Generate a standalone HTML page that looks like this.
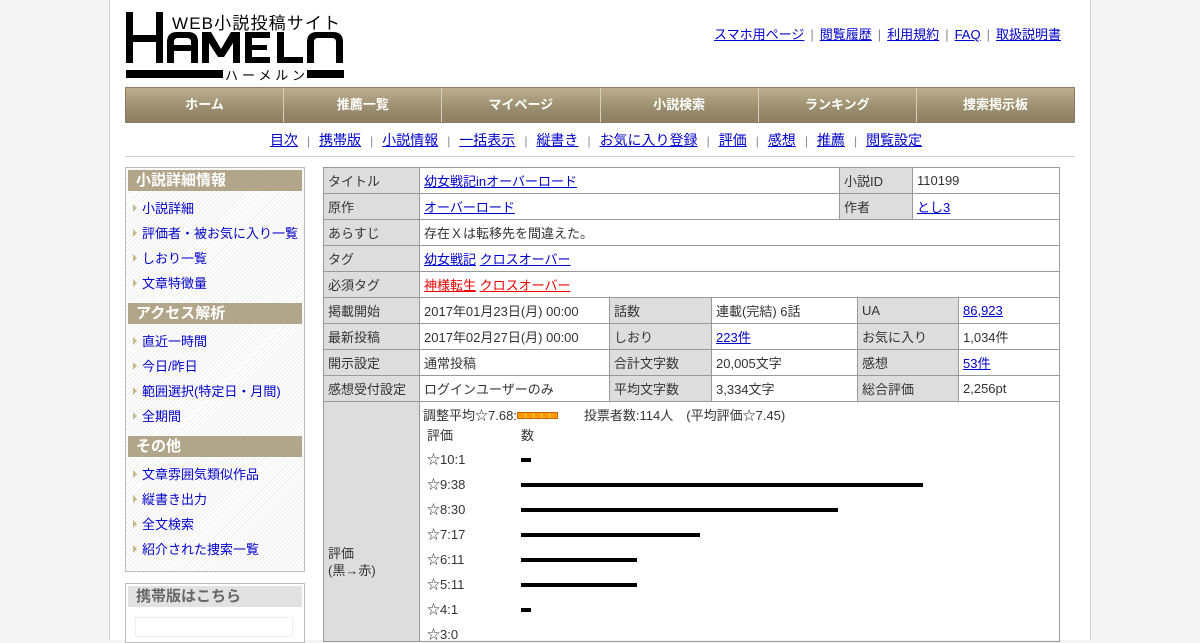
<!DOCTYPE html>
<html><head><meta charset="utf-8"><style>
*{margin:0;padding:0;box-sizing:border-box}
body{width:1200px;height:630px;overflow:hidden;background:#f4f4f4;font-family:"Liberation Sans","Noto Sans CJK JP",sans-serif;font-size:13px;color:#333;position:relative}
a{color:#00c;text-decoration:underline}
.page{position:absolute;left:109px;top:0;width:982px;height:640px;background:#fff;border-left:1px solid #ccc;border-right:1px solid #ccc}
.abs{position:absolute}
.toplinks{position:absolute;right:29px;top:24px;font-size:13px;color:#666}
.toplinks span{margin:0 6px;color:#888}
.nav{position:absolute;left:15px;top:87px;width:950px;height:36px;display:flex;border:1px solid #8a7d60}
.nav div{flex:1;text-align:center;line-height:34px;color:#fff;font-weight:bold;font-size:13px;background:linear-gradient(#bcae8d,#9b8e6f 60%,#8c7f61);border-right:1px solid #d8d0bb}
.nav div:last-child{border-right:none}
.sub{position:absolute;left:11px;width:950px;top:130px;text-align:center;font-size:14px;color:#666}
.sub span{margin:0 9px;color:#888;font-size:12px}
.hr{position:absolute;left:15px;top:156px;width:950px;height:1px;background:#ccc}
.side{position:absolute;left:15px;top:167px;width:180px;height:405px;border:1px solid #bbb;background:repeating-linear-gradient(135deg,#fff 0 2px,#eee 2px 3px)}
.side h3{margin:2px 2px 0;height:21px;background:#b1a68a;color:#fff;font-size:15px;line-height:21px;padding-left:8px}
.side ul{list-style:none;margin:5px 0 7px}
.side li{height:25px;line-height:25px;padding-left:16px;position:relative;font-size:13px}
.side li a{text-decoration:none;color:#00c}
.side li:before{content:"";position:absolute;left:7px;top:8px;border-left:4px solid #c8b98c;border-top:4px solid transparent;border-bottom:4px solid transparent}
.side2{position:absolute;left:15px;top:583px;width:180px;height:60px;border:1px solid #bbb;background:#fff}
.side2 h3{margin:2px 2px 0;height:21px;background:#e2e2e2;color:#666;font-size:15px;line-height:21px;padding-left:8px}
table{border-collapse:collapse;position:absolute;left:213px;width:736px;table-layout:fixed}
td{border:1px solid #999;height:26px;padding:0 4px;font-size:13px;color:#333;white-space:nowrap;overflow:hidden}
td.l{background:#ddd}
.bar{position:absolute;left:521px;height:4px;background:#000}
.rt{position:absolute;left:427px;font-size:13px;color:#333}
</style></head><body>
<div class="page">
<svg class="abs" style="left:16px;top:10px" width="220" height="72" viewBox="0 0 220 72">
<g fill="#000">
<rect x="0" y="2" width="7" height="51"/><rect x="30" y="2" width="7" height="51"/><rect x="0" y="25" width="37" height="7"/>
<path d="M41 53V32q0-10 10-10h11q10 0 10 10v21h-7V41H48v12zM48 35h17v-3q0-4-4-4h-9q-4 0-4 4z"/>
<path d="M76 53V22h9l10 17 10-17h9v31h-7V33l-9 14h-6l-9-14v20z"/>
<path d="M119 22h25v6h-18v7h15v5h-15v7h18v6h-25z"/>
<path d="M151 22h7v25h19v6h-26z"/>
<path d="M181 53V32q0-10 10-10h16q10 0 10 10v21h-7V32q0-4-4-4h-14q-4 0-4 4v21z"/>
<rect x="0" y="60" width="97" height="8"/><rect x="181" y="60" width="37" height="8"/>
</g>
<text x="46" y="19" font-size="17" textLength="168" font-family="Liberation Sans,Noto Sans CJK JP,sans-serif">WEB小説投稿サイト</text>
<text x="99" y="70" font-size="13" textLength="80" font-family="Liberation Sans,Noto Sans CJK JP,sans-serif">ハーメルン</text>
</svg>
<div class="toplinks"><a>スマホ用ページ</a><span>|</span><a>閲覧履歴</a><span>|</span><a>利用規約</a><span>|</span><a>FAQ</a><span>|</span><a>取扱説明書</a></div>
<div class="nav"><div>ホーム</div><div>推薦一覧</div><div>マイページ</div><div>小説検索</div><div>ランキング</div><div>捜索掲示板</div></div>
<div class="sub"><a>目次</a><span>|</span><a>携帯版</a><span>|</span><a>小説情報</a><span>|</span><a>一括表示</a><span>|</span><a>縦書き</a><span>|</span><a>お気に入り登録</a><span>|</span><a>評価</a><span>|</span><a>感想</a><span>|</span><a>推薦</a><span>|</span><a>閲覧設定</a></div>
<div class="hr"></div>
<div class="side">
<h3>小説詳細情報</h3><ul><li><a>小説詳細</a></li><li><a>評価者・被お気に入り一覧</a></li><li><a>しおり一覧</a></li><li><a>文章特徴量</a></li></ul>
<h3>アクセス解析</h3><ul><li><a>直近一時間</a></li><li><a>今日/昨日</a></li><li><a>範囲選択(特定日・月間)</a></li><li><a>全期間</a></li></ul>
<h3>その他</h3><ul><li><a>文章雰囲気類似作品</a></li><li><a>縦書き出力</a></li><li><a>全文検索</a></li><li><a>紹介された捜索一覧</a></li></ul>
</div>
<div class="side2"><h3>携帯版はこちら</h3></div>
<table style="top:167px">
<colgroup><col style="width:96px"><col style="width:420px"><col style="width:73px"><col style="width:147px"></colgroup>
<tr><td class="l">タイトル</td><td><a>幼女戦記inオーバーロード</a></td><td class="l">小説ID</td><td>110199</td></tr>
<tr><td class="l">原作</td><td><a>オーバーロード</a></td><td class="l">作者</td><td><a>とし3</a></td></tr>
<tr><td class="l">あらすじ</td><td colspan="3">存在Ｘは転移先を間違えた。</td></tr>
<tr><td class="l">タグ</td><td colspan="3"><a>幼女戦記</a> <a>クロスオーバー</a></td></tr>
<tr><td class="l">必須タグ</td><td colspan="3"><a style="color:#e00">神様転生</a> <a style="color:#e00">クロスオーバー</a></td></tr>
</table>
<table style="top:297px">
<colgroup><col style="width:96px"><col style="width:190px"><col style="width:102px"><col style="width:146px"><col style="width:101px"><col style="width:101px"></colgroup>
<tr><td class="l">掲載開始</td><td>2017年01月23日(月) 00:00</td><td class="l">話数</td><td>連載(完結) 6話</td><td class="l">UA</td><td><a>86,923</a></td></tr>
<tr><td class="l">最新投稿</td><td>2017年02月27日(月) 00:00</td><td class="l">しおり</td><td><a>223件</a></td><td class="l">お気に入り</td><td>1,034件</td></tr>
<tr><td class="l">開示設定</td><td>通常投稿</td><td class="l">合計文字数</td><td>20,005文字</td><td class="l">感想</td><td><a>53件</a></td></tr>
<tr><td class="l">感想受付設定</td><td>ログインユーザーのみ</td><td class="l">平均文字数</td><td>3,334文字</td><td class="l">総合評価</td><td>2,256pt</td></tr>
<tr><td class="l" style="height:240px;vertical-align:top;padding-top:143px;line-height:17px">評価<br>(黒→赤)</td><td colspan="5" style="height:240px"></td></tr>
</table>
</div>
<div class="abs" style="left:423px;top:405px;font-size:13px;color:#333">調整平均☆7.68:<span style="display:inline-block;width:41px;height:7px;background:repeating-linear-gradient(90deg,#f90 0 7px,#fc6 7px 8px);border:1px solid #c60;vertical-align:1px"></span><span style="margin-left:26px">投票者数:114人　(平均評価☆7.45)</span></div>
<div class="rt" style="top:425px">評価</div><div class="abs" style="left:521px;top:425px;font-size:13px;color:#333">数</div>
<div class="rt" style="top:449px">☆10:1</div><div class="bar" style="top:458px;width:10px"></div>
<div class="rt" style="top:474px">☆9:38</div><div class="bar" style="top:483px;width:402px"></div>
<div class="rt" style="top:499px">☆8:30</div><div class="bar" style="top:508px;width:317px"></div>
<div class="rt" style="top:524px">☆7:17</div><div class="bar" style="top:533px;width:179px"></div>
<div class="rt" style="top:549px">☆6:11</div><div class="bar" style="top:558px;width:116px"></div>
<div class="rt" style="top:574px">☆5:11</div><div class="bar" style="top:583px;width:116px"></div>
<div class="rt" style="top:599px">☆4:1</div><div class="bar" style="top:608px;width:10px"></div>
<div class="rt" style="top:624px">☆3:0</div>
<div class="abs" style="left:135px;top:617px;width:158px;height:20px;background:#fff;border:1px solid #eee"></div>
</body></html>
